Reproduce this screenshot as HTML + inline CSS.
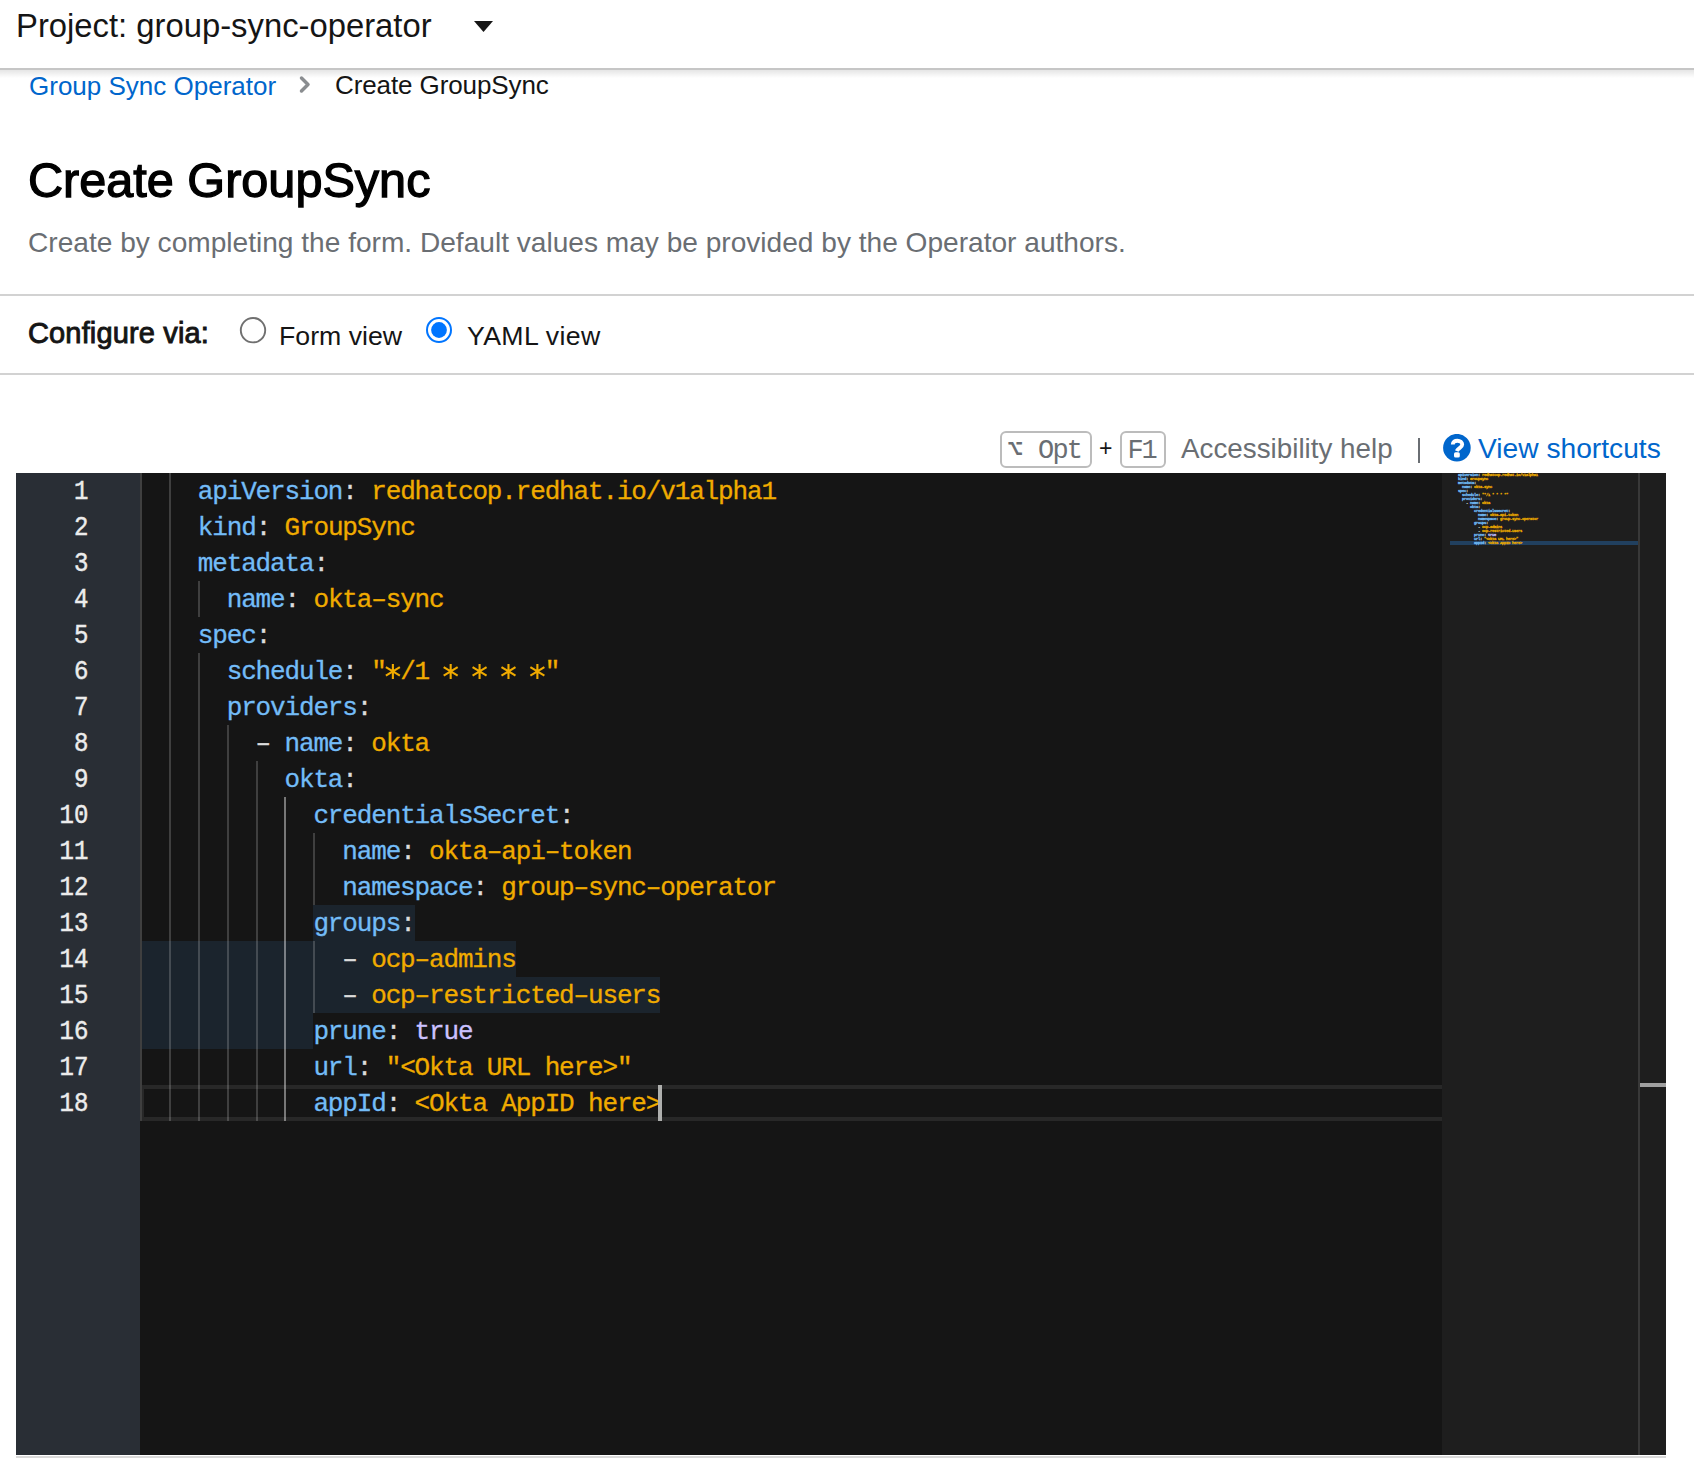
<!DOCTYPE html>
<html>
<head>
<meta charset="utf-8">
<style>
html,body{margin:0;padding:0;}
body{width:1694px;height:1480px;overflow:hidden;background:#fff;position:relative;font-family:"Liberation Sans",sans-serif;}
.a{position:absolute;white-space:pre;line-height:1;}
.hdr-line{position:absolute;left:0;top:68px;width:1694px;height:2px;background:#c6c6c6;}
.hdr-shadow{position:absolute;left:0;top:70px;width:1694px;height:8px;background:linear-gradient(rgba(0,0,0,0.10),rgba(0,0,0,0));}
.div{position:absolute;left:0;width:1694px;height:2px;background:#d2d2d2;}
.kbd{position:absolute;box-sizing:border-box;border:2px solid #bcbcbc;border-radius:6px;height:37px;top:431px;}
.mono{font-family:"Liberation Mono",monospace;}
/* editor */
.ed{position:absolute;left:16px;top:473px;width:1650px;height:982px;background:#151515;overflow:hidden;}
.gut{position:absolute;left:16px;top:473px;width:124px;height:982px;background:#292e35;}
.mm{position:absolute;left:1442px;top:473px;width:196px;height:982px;background:#1e1e1e;}
.sb{position:absolute;left:1640px;top:473px;width:26px;height:982px;background:#1e1e1e;}
.sbl{position:absolute;left:1638px;top:473px;width:1.5px;height:982px;background:#383838;}
.sel{position:absolute;height:36px;background:#1b242d;}
.cur{position:absolute;left:142px;width:1300px;height:36px;box-sizing:border-box;border:solid #282828;border-width:4px 0 4px 2px;}
.g{position:absolute;width:2px;height:36px;background:rgba(255,255,255,0.18);}
.ga{background:rgba(255,255,255,0.42);}
.ln{position:absolute;left:140px;height:36px;line-height:36px;font-family:"Liberation Mono",monospace;font-size:26px;letter-spacing:-1.152px;white-space:pre;color:#d4d4d4;-webkit-text-stroke:0.3px;}
.ln span{position:relative;top:1px;}
.num{position:absolute;left:16px;width:72.5px;padding-top:1px;box-sizing:border-box;text-align:right;height:36px;line-height:36px;font-family:"Liberation Mono",monospace;font-size:27px;letter-spacing:0;transform:scaleX(0.892);transform-origin:right center;color:#ececec;-webkit-text-stroke:0.45px #ececec;}
.caret{position:absolute;width:4px;height:36px;background:#aeafad;}
</style>
</head>
<body>
<!-- masthead -->
<div class="a" style="left:16px;top:10px;font-size:32.8px;color:#151515;">Project: group-sync-operator</div>
<svg style="position:absolute;left:0;top:0" width="520" height="60"><polygon points="474,21 493,21 483.5,32" fill="#151515"/></svg>
<div class="hdr-line"></div>
<div class="hdr-shadow"></div>

<!-- breadcrumb -->
<div class="a" style="left:29px;top:72.5px;font-size:26px;color:#0066cc;">Group Sync Operator</div>
<svg style="position:absolute;left:296px;top:74px" width="20" height="22"><polyline points="5.5,4 12,10.5 5.5,17" fill="none" stroke="#8a8d90" stroke-width="3.5" stroke-linecap="round" stroke-linejoin="round"/></svg>
<div class="a" style="left:335px;top:72.3px;font-size:26px;letter-spacing:-0.1px;color:#151515;">Create GroupSync</div>

<!-- title -->
<div class="a" style="left:28px;top:156px;font-size:48.6px;-webkit-text-stroke:1.3px #000;color:#000;">Create GroupSync</div>
<div class="a" style="left:28px;top:229px;font-size:28.1px;color:#6a6e73;">Create by completing the form. Default values may be provided by the Operator authors.</div>

<div class="div" style="top:294px"></div>

<!-- configure via -->
<div class="a" style="left:28px;top:319px;font-size:29px;letter-spacing:0.15px;-webkit-text-stroke:0.9px #151515;color:#151515;">Configure via:</div>
<svg style="position:absolute;left:230px;top:305px" width="240" height="50">
  <circle cx="23" cy="25.2" r="12.2" fill="#fff" stroke="#707070" stroke-width="1.9"/>
  <circle cx="209" cy="25" r="12" fill="#fff" stroke="#0075ff" stroke-width="2"/>
  <circle cx="209" cy="25" r="7.9" fill="#0075ff"/>
</svg>
<div class="a" style="left:279px;top:323px;font-size:26.7px;color:#151515;">Form view</div>
<div class="a" style="left:467px;top:323px;font-size:26.7px;letter-spacing:0.35px;color:#151515;">YAML view</div>

<div class="div" style="top:373px"></div>

<!-- toolbar -->
<div class="kbd" style="left:1000px;width:92px;"></div>
<div class="a mono" style="left:1007px;top:437.5px;font-size:27px;color:#6a6e73;">⌥</div><div class="a mono" style="left:1038px;top:437.5px;font-size:27px;letter-spacing:-1.8px;color:#6a6e73;">Opt</div>
<div class="a" style="left:1099px;top:437px;font-size:23px;color:#151515;">+</div>
<div class="kbd" style="left:1120px;width:46px;"></div>
<div class="a mono" style="left:1127.5px;top:437.5px;font-size:27px;letter-spacing:-2.2px;color:#6a6e73;">F1</div>
<div class="a" style="left:1181px;top:435px;font-size:27.8px;color:#6a6e73;">Accessibility help</div>
<div style="position:absolute;left:1418px;top:438px;width:2.4px;height:25px;background:#6a6e73;"></div>
<svg style="position:absolute;left:1443px;top:434px" width="28" height="28" viewBox="0 0 28 28">
  <circle cx="13.9" cy="13.7" r="13.8" fill="#0066cc"/>
  <path d="M9.8 10.6 C9.8 7.9 11.9 6.7 14.4 6.7 C17.2 6.7 19.2 8.3 19.2 10.6 C19.2 13.6 15.4 13.6 13.7 17" stroke="#fff" stroke-width="3.9" fill="none"/>
  <rect x="11" y="18.2" width="5.8" height="5.4" rx="1.6" fill="#fff"/>
</svg>
<div class="a" style="left:1478px;top:434px;font-size:28.2px;color:#0066cc;">View shortcuts</div>

<!-- editor -->
<div class="ed"></div>
<div class="gut"></div>
<div class="mm"></div>
<div class="sb"></div>
<div class="sbl"></div>
<div class="sel" style="left:313px;top:905px;width:102px"></div>
<div class="sel" style="left:142px;top:941px;width:374px"></div>
<div class="sel" style="left:142px;top:977px;width:518px"></div>
<div class="sel" style="left:142px;top:1013px;width:171px"></div>
<div class="cur" style="top:1085px"></div>
<div class="g" style="left:140px;top:473px"></div>
<div class="g" style="left:169px;top:473px"></div>
<div class="g" style="left:140px;top:509px"></div>
<div class="g" style="left:169px;top:509px"></div>
<div class="g" style="left:140px;top:545px"></div>
<div class="g" style="left:169px;top:545px"></div>
<div class="g" style="left:140px;top:581px"></div>
<div class="g" style="left:169px;top:581px"></div>
<div class="g" style="left:198px;top:581px"></div>
<div class="g" style="left:140px;top:617px"></div>
<div class="g" style="left:169px;top:617px"></div>
<div class="g" style="left:140px;top:653px"></div>
<div class="g" style="left:169px;top:653px"></div>
<div class="g" style="left:198px;top:653px"></div>
<div class="g" style="left:140px;top:689px"></div>
<div class="g" style="left:169px;top:689px"></div>
<div class="g" style="left:198px;top:689px"></div>
<div class="g" style="left:140px;top:725px"></div>
<div class="g" style="left:169px;top:725px"></div>
<div class="g" style="left:198px;top:725px"></div>
<div class="g" style="left:227px;top:725px"></div>
<div class="g" style="left:140px;top:761px"></div>
<div class="g" style="left:169px;top:761px"></div>
<div class="g" style="left:198px;top:761px"></div>
<div class="g" style="left:227px;top:761px"></div>
<div class="g" style="left:256px;top:761px"></div>
<div class="g" style="left:140px;top:797px"></div>
<div class="g" style="left:169px;top:797px"></div>
<div class="g" style="left:198px;top:797px"></div>
<div class="g" style="left:227px;top:797px"></div>
<div class="g" style="left:256px;top:797px"></div>
<div class="g ga" style="left:284px;top:797px"></div>
<div class="g" style="left:140px;top:833px"></div>
<div class="g" style="left:169px;top:833px"></div>
<div class="g" style="left:198px;top:833px"></div>
<div class="g" style="left:227px;top:833px"></div>
<div class="g" style="left:256px;top:833px"></div>
<div class="g ga" style="left:284px;top:833px"></div>
<div class="g" style="left:313px;top:833px"></div>
<div class="g" style="left:140px;top:869px"></div>
<div class="g" style="left:169px;top:869px"></div>
<div class="g" style="left:198px;top:869px"></div>
<div class="g" style="left:227px;top:869px"></div>
<div class="g" style="left:256px;top:869px"></div>
<div class="g ga" style="left:284px;top:869px"></div>
<div class="g" style="left:313px;top:869px"></div>
<div class="g" style="left:140px;top:905px"></div>
<div class="g" style="left:169px;top:905px"></div>
<div class="g" style="left:198px;top:905px"></div>
<div class="g" style="left:227px;top:905px"></div>
<div class="g" style="left:256px;top:905px"></div>
<div class="g ga" style="left:284px;top:905px"></div>
<div class="g" style="left:140px;top:941px"></div>
<div class="g" style="left:169px;top:941px"></div>
<div class="g" style="left:198px;top:941px"></div>
<div class="g" style="left:227px;top:941px"></div>
<div class="g" style="left:256px;top:941px"></div>
<div class="g ga" style="left:284px;top:941px"></div>
<div class="g" style="left:313px;top:941px"></div>
<div class="g" style="left:140px;top:977px"></div>
<div class="g" style="left:169px;top:977px"></div>
<div class="g" style="left:198px;top:977px"></div>
<div class="g" style="left:227px;top:977px"></div>
<div class="g" style="left:256px;top:977px"></div>
<div class="g ga" style="left:284px;top:977px"></div>
<div class="g" style="left:313px;top:977px"></div>
<div class="g" style="left:140px;top:1013px"></div>
<div class="g" style="left:169px;top:1013px"></div>
<div class="g" style="left:198px;top:1013px"></div>
<div class="g" style="left:227px;top:1013px"></div>
<div class="g" style="left:256px;top:1013px"></div>
<div class="g ga" style="left:284px;top:1013px"></div>
<div class="g" style="left:140px;top:1049px"></div>
<div class="g" style="left:169px;top:1049px"></div>
<div class="g" style="left:198px;top:1049px"></div>
<div class="g" style="left:227px;top:1049px"></div>
<div class="g" style="left:256px;top:1049px"></div>
<div class="g ga" style="left:284px;top:1049px"></div>
<div class="g" style="left:140px;top:1085px"></div>
<div class="g" style="left:169px;top:1085px"></div>
<div class="g" style="left:198px;top:1085px"></div>
<div class="g" style="left:227px;top:1085px"></div>
<div class="g" style="left:256px;top:1085px"></div>
<div class="g ga" style="left:284px;top:1085px"></div>
<div class="ln" style="top:473px">    <span style="color:#73bcf7">apiVersion</span><span style="color:#dcdcdc">:</span> <span style="color:#f0ab00">redhatcop.redhat.io/v1alpha1</span></div>
<div class="num" style="top:473px">1</div>
<div class="ln" style="top:509px">    <span style="color:#73bcf7">kind</span><span style="color:#dcdcdc">:</span> <span style="color:#f0ab00">GroupSync</span></div>
<div class="num" style="top:509px">2</div>
<div class="ln" style="top:545px">    <span style="color:#73bcf7">metadata</span><span style="color:#dcdcdc">:</span></div>
<div class="num" style="top:545px">3</div>
<div class="ln" style="top:581px">      <span style="color:#73bcf7">name</span><span style="color:#dcdcdc">:</span> <span style="color:#f0ab00">okta&#8211;sync</span></div>
<div class="num" style="top:581px">4</div>
<div class="ln" style="top:617px">    <span style="color:#73bcf7">spec</span><span style="color:#dcdcdc">:</span></div>
<div class="num" style="top:617px">5</div>
<div class="ln" style="top:653px">      <span style="color:#73bcf7">schedule</span><span style="color:#dcdcdc">:</span> <span style="color:#f0ab00">&quot; /1        &quot;</span></div>
<div class="num" style="top:653px">6</div>
<div class="ln" style="top:689px">      <span style="color:#73bcf7">providers</span><span style="color:#dcdcdc">:</span></div>
<div class="num" style="top:689px">7</div>
<div class="ln" style="top:725px">        <span style="color:#dcdcdc">&#8211;</span> <span style="color:#73bcf7">name</span><span style="color:#dcdcdc">:</span> <span style="color:#f0ab00">okta</span></div>
<div class="num" style="top:725px">8</div>
<div class="ln" style="top:761px">          <span style="color:#73bcf7">okta</span><span style="color:#dcdcdc">:</span></div>
<div class="num" style="top:761px">9</div>
<div class="ln" style="top:797px">            <span style="color:#73bcf7">credentialsSecret</span><span style="color:#dcdcdc">:</span></div>
<div class="num" style="top:797px">10</div>
<div class="ln" style="top:833px">              <span style="color:#73bcf7">name</span><span style="color:#dcdcdc">:</span> <span style="color:#f0ab00">okta&#8211;api&#8211;token</span></div>
<div class="num" style="top:833px">11</div>
<div class="ln" style="top:869px">              <span style="color:#73bcf7">namespace</span><span style="color:#dcdcdc">:</span> <span style="color:#f0ab00">group&#8211;sync&#8211;operator</span></div>
<div class="num" style="top:869px">12</div>
<div class="ln" style="top:905px">            <span style="color:#73bcf7">groups</span><span style="color:#dcdcdc">:</span></div>
<div class="num" style="top:905px">13</div>
<div class="ln" style="top:941px">              <span style="color:#dcdcdc">&#8211;</span> <span style="color:#f0ab00">ocp&#8211;admins</span></div>
<div class="num" style="top:941px">14</div>
<div class="ln" style="top:977px">              <span style="color:#dcdcdc">&#8211;</span> <span style="color:#f0ab00">ocp&#8211;restricted&#8211;users</span></div>
<div class="num" style="top:977px">15</div>
<div class="ln" style="top:1013px">            <span style="color:#73bcf7">prune</span><span style="color:#dcdcdc">:</span> <span style="color:#cbc1ff">true</span></div>
<div class="num" style="top:1013px">16</div>
<div class="ln" style="top:1049px">            <span style="color:#73bcf7">url</span><span style="color:#dcdcdc">:</span> <span style="color:#f0ab00">&quot;&lt;Okta URL here&gt;&quot;</span></div>
<div class="num" style="top:1049px">17</div>
<div class="ln" style="top:1085px">            <span style="color:#73bcf7">appId</span><span style="color:#dcdcdc">:</span> <span style="color:#f0ab00">&lt;Okta AppID here&gt;</span></div>
<div class="num" style="top:1085px">18</div>
<svg style="position:absolute;left:0;top:0" width="1694" height="1480"><path d="M392.88 663.90V678.90M385.88 667.10L399.88 675.70M385.88 675.70L399.88 667.10" stroke="#f0ab00" stroke-width="2.1" fill="none"/><path d="M450.68 663.90V678.90M443.68 667.10L457.68 675.70M443.68 675.70L457.68 667.10" stroke="#f0ab00" stroke-width="2.1" fill="none"/><path d="M479.57 663.90V678.90M472.57 667.10L486.57 675.70M472.57 675.70L486.57 667.10" stroke="#f0ab00" stroke-width="2.1" fill="none"/><path d="M508.48 663.90V678.90M501.48 667.10L515.48 675.70M501.48 675.70L515.48 667.10" stroke="#f0ab00" stroke-width="2.1" fill="none"/><path d="M537.38 663.90V678.90M530.38 667.10L544.38 675.70M530.38 675.70L544.38 667.10" stroke="#f0ab00" stroke-width="2.1" fill="none"/></svg>
<div class="caret" style="left:658px;top:1085px"></div>
<svg style="position:absolute;left:0;top:0;white-space:pre" width="1694" height="1480" font-family="Liberation Mono" font-size="3.9" letter-spacing="-0.34" stroke-width="0.3">
<rect x="1450" y="541" width="188" height="4" fill="#21405f"/>
<text x="1458" y="475.9" fill="#73bcf7" stroke="#73bcf7">apiVersion</text>
<text x="1478" y="475.9" fill="#dcdcdc" stroke="#dcdcdc">:</text>
<text x="1482" y="475.9" fill="#f0ab00" stroke="#f0ab00">redhatcop.redhat.io/v1alpha1</text>
<text x="1458" y="479.9" fill="#73bcf7" stroke="#73bcf7">kind</text>
<text x="1466" y="479.9" fill="#dcdcdc" stroke="#dcdcdc">:</text>
<text x="1470" y="479.9" fill="#f0ab00" stroke="#f0ab00">GroupSync</text>
<text x="1458" y="483.9" fill="#73bcf7" stroke="#73bcf7">metadata</text>
<text x="1474" y="483.9" fill="#dcdcdc" stroke="#dcdcdc">:</text>
<text x="1462" y="487.9" fill="#73bcf7" stroke="#73bcf7">name</text>
<text x="1470" y="487.9" fill="#dcdcdc" stroke="#dcdcdc">:</text>
<text x="1474" y="487.9" fill="#f0ab00" stroke="#f0ab00">okta-sync</text>
<text x="1458" y="491.9" fill="#73bcf7" stroke="#73bcf7">spec</text>
<text x="1466" y="491.9" fill="#dcdcdc" stroke="#dcdcdc">:</text>
<text x="1462" y="495.9" fill="#73bcf7" stroke="#73bcf7">schedule</text>
<text x="1478" y="495.9" fill="#dcdcdc" stroke="#dcdcdc">:</text>
<text x="1482" y="495.9" fill="#f0ab00" stroke="#f0ab00">&quot;*/1 * * * *&quot;</text>
<text x="1462" y="499.9" fill="#73bcf7" stroke="#73bcf7">providers</text>
<text x="1480" y="499.9" fill="#dcdcdc" stroke="#dcdcdc">:</text>
<text x="1466" y="503.9" fill="#dcdcdc" stroke="#dcdcdc">-</text>
<text x="1470" y="503.9" fill="#73bcf7" stroke="#73bcf7">name</text>
<text x="1478" y="503.9" fill="#dcdcdc" stroke="#dcdcdc">:</text>
<text x="1482" y="503.9" fill="#f0ab00" stroke="#f0ab00">okta</text>
<text x="1470" y="507.9" fill="#73bcf7" stroke="#73bcf7">okta</text>
<text x="1478" y="507.9" fill="#dcdcdc" stroke="#dcdcdc">:</text>
<text x="1474" y="511.9" fill="#73bcf7" stroke="#73bcf7">credentialsSecret</text>
<text x="1508" y="511.9" fill="#dcdcdc" stroke="#dcdcdc">:</text>
<text x="1478" y="515.9" fill="#73bcf7" stroke="#73bcf7">name</text>
<text x="1486" y="515.9" fill="#dcdcdc" stroke="#dcdcdc">:</text>
<text x="1490" y="515.9" fill="#f0ab00" stroke="#f0ab00">okta-api-token</text>
<text x="1478" y="519.9" fill="#73bcf7" stroke="#73bcf7">namespace</text>
<text x="1496" y="519.9" fill="#dcdcdc" stroke="#dcdcdc">:</text>
<text x="1500" y="519.9" fill="#f0ab00" stroke="#f0ab00">group-sync-operator</text>
<text x="1474" y="523.9" fill="#73bcf7" stroke="#73bcf7">groups</text>
<text x="1486" y="523.9" fill="#dcdcdc" stroke="#dcdcdc">:</text>
<text x="1478" y="527.9" fill="#dcdcdc" stroke="#dcdcdc">-</text>
<text x="1482" y="527.9" fill="#f0ab00" stroke="#f0ab00">ocp-admins</text>
<text x="1478" y="531.9" fill="#dcdcdc" stroke="#dcdcdc">-</text>
<text x="1482" y="531.9" fill="#f0ab00" stroke="#f0ab00">ocp-restricted-users</text>
<text x="1474" y="535.9" fill="#73bcf7" stroke="#73bcf7">prune</text>
<text x="1484" y="535.9" fill="#dcdcdc" stroke="#dcdcdc">:</text>
<text x="1488" y="535.9" fill="#cbc1ff" stroke="#cbc1ff">true</text>
<text x="1474" y="539.9" fill="#73bcf7" stroke="#73bcf7">url</text>
<text x="1480" y="539.9" fill="#dcdcdc" stroke="#dcdcdc">:</text>
<text x="1484" y="539.9" fill="#f0ab00" stroke="#f0ab00">&quot;&lt;Okta URL here&gt;&quot;</text>
<text x="1474" y="543.9" fill="#73bcf7" stroke="#73bcf7">appId</text>
<text x="1484" y="543.9" fill="#dcdcdc" stroke="#dcdcdc">:</text>
<text x="1488" y="543.9" fill="#f0ab00" stroke="#f0ab00">&lt;Okta AppID here&gt;</text>
</svg>
<div style="position:absolute;left:1640px;top:1083px;width:26px;height:4px;background:#a0a0a0;"></div>
<div style="position:absolute;left:16px;top:1456px;width:1650px;height:2px;background:#d9d9d9;"></div>
</body>
</html>
